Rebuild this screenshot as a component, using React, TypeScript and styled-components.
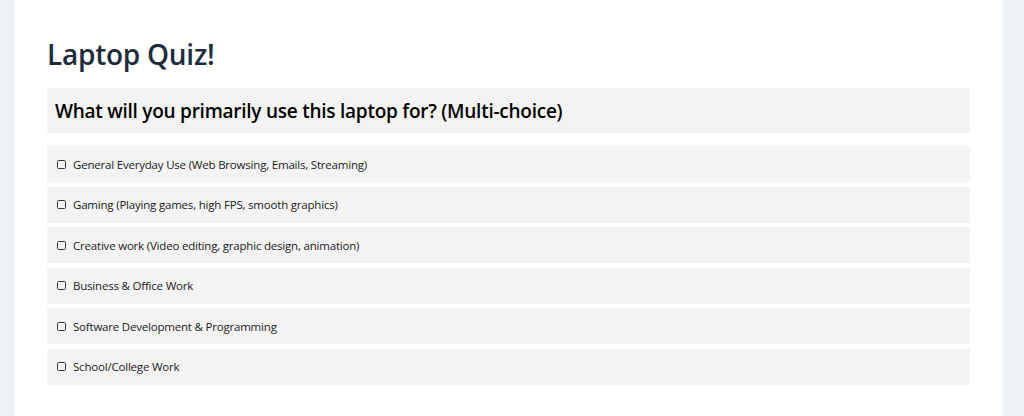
import React from 'react';
import styled, { createGlobalStyle } from 'styled-components';

const options = [
    'General Everyday Use (Web Browsing, Emails, Streaming)',
    'Gaming (Playing games, high FPS, smooth graphics)',
    'Creative work (Video editing, graphic design, animation)',
    'Business & Office Work',
    'Software Development & Programming',
    'School/College Work',
];

const GlobalStyle = createGlobalStyle`
    html, body {
        margin: 0;
        padding: 0;
        background: #eef3f8;
        font-family: 'Open Sans', 'Noto Sans', sans-serif;
    }
`;

const Page = styled.div`
    padding: 0 21px 0 14px;
    min-height: 416px;
    box-sizing: border-box;
    display: flex;
`;

const Panel = styled.main`
    flex: 1;
    background: #ffffff;
    padding: 34px 33px 32px;
    min-height: 416px;
    box-sizing: border-box;
`;

const Title = styled.h1`
    margin: 0 0 14px;
    font-size: 28px;
    font-weight: 600;
    line-height: 40px;
    letter-spacing: -0.25px;
    color: #1e2b3c;
`;

const Question = styled.h2`
    margin: 0 0 13px;
    padding: 0 8px;
    height: 45px;
    display: flex;
    align-items: center;
    background: #f3f3f3;
    font-size: 19px;
    font-weight: 600;
    letter-spacing: -0.25px;
    color: #000000;
`;

const OptionList = styled.ul`
    list-style: none;
    margin: 0;
    padding: 0;
    display: flex;
    flex-direction: column;
    gap: 4.5px;
`;

const Option = styled.li`
    height: 36px;
    padding: 0 10px;
    display: flex;
    align-items: center;
    gap: 7px;
    background: #f3f3f3;
    font-size: 11.5px;
    letter-spacing: -0.2px;
    color: #222222;
    cursor: pointer;
`;

const Box = styled.span`
    width: 7px;
    height: 7px;
    border: 1.2px solid #333333;
    border-radius: 1.5px;
    flex-shrink: 0;
`;

const App: React.FC = () => {
    return (
        <>
            <GlobalStyle />
            <Page>
                <Panel>
                    <Title>Laptop Quiz!</Title>
                    <Question>What will you primarily use this laptop for? (Multi-choice)</Question>
                    <OptionList>
                        {options.map((opt) => (
                            <Option key={opt}>
                                <Box />
                                {opt}
                            </Option>
                        ))}
                    </OptionList>
                </Panel>
            </Page>
        </>
    );
};

export default App;
